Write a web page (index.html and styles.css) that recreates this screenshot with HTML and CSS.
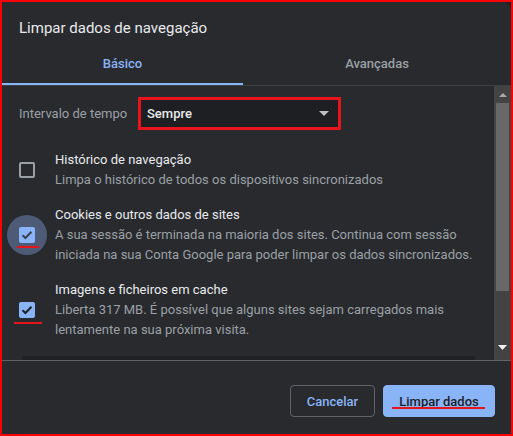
FILE: index.html
```html
<!DOCTYPE html>
<html lang="pt">
<head>
<meta charset="utf-8">
<title>Limpar dados de navegação</title>
<link rel="stylesheet" href="styles.css">
</head>
<body>
<div class="frame">
  <div class="dialog">
    <h1 class="title">Limpar dados de navegação</h1>
    <div class="tabs">
      <div class="tab tab-basic active">Básico</div>
      <div class="tab tab-adv">Avançadas</div>
    </div>
    <div class="body">
      <div class="scroll">
        <div class="time-row">
          <span class="time-label">Intervalo de tempo</span>
          <div class="select">
            <span class="select-value">Sempre</span>
            <svg class="select-arrow" width="10" height="5" viewBox="0 0 10 5"><path d="M0 0H10L5 5Z" fill="#bdc1c6"/></svg>
          </div>
        </div>
        <div class="item">
          <div class="cb-cell"><span class="cb"></span></div>
          <div class="item-text">
            <div class="item-title">Histórico de navegação</div>
            <div class="item-desc">Limpa o histórico de todos os dispositivos sincronizados</div>
          </div>
        </div>
        <div class="item">
          <div class="cb-cell">
            <span class="ripple"></span>
            <span class="cb checked mark-a">
              <svg width="12" height="10" viewBox="0 0 12 10"><path d="M1.5 5.2L4.4 8L10.5 1.8" fill="none" stroke="#3c4250" stroke-width="2"/></svg>
            </span>
          </div>
          <div class="item-text">
            <div class="item-title">Cookies e outros dados de sites</div>
            <div class="item-desc">A sua sessão é terminada na maioria dos sites. Continua com sessão<br>iniciada na sua Conta Google para poder limpar os dados sincronizados.</div>
          </div>
        </div>
        <div class="item">
          <div class="cb-cell">
            <span class="cb checked mark-b">
              <svg width="12" height="10" viewBox="0 0 12 10"><path d="M1.5 5.2L4.4 8L10.5 1.8" fill="none" stroke="#202124" stroke-width="2"/></svg>
            </span>
          </div>
          <div class="item-text">
            <div class="item-title">Imagens e ficheiros em cache</div>
            <div class="item-desc">Liberta 317 MB. É possível que alguns sites sejam carregados mais<br>lentamente na sua próxima visita.</div>
          </div>
        </div>
        <div class="next-strip"></div>
      </div>
      <div class="scrollbar">
        <div class="sb-btn"><svg width="8" height="4" viewBox="0 0 8 4"><path d="M0 4H8L4 0Z" fill="#a8a8a8"/></svg></div>
        <div class="sb-track"><div class="sb-thumb"></div></div>
        <div class="sb-btn sb-down"><svg width="9" height="5" viewBox="0 0 9 5"><path d="M0 0H9L4.5 5Z" fill="#f2f2f2"/></svg></div>
      </div>
    </div>
    <div class="footer">
      <button class="btn btn-cancel">Cancelar</button>
      <button class="btn btn-primary">Limpar dados</button>
    </div>
  </div>
</div>
</body>
</html>
```
FILE: styles.css
```css
* { box-sizing: border-box; }
html, body { margin: 0; padding: 0; }
body {
  width: 513px;
  height: 436px;
  font-family: Roboto, "Noto Sans", sans-serif;
  background: #202124;
  overflow: hidden;
}
.frame {
  width: 513px;
  height: 436px;
  border: 2px solid #ff0000;
  background: #1f2023;
}
.dialog {
  height: 100%;
  background: #292a2d;
  border-top-right-radius: 8px;
  display: flex;
  flex-direction: column;
}
.title {
  margin: 0;
  padding: 15px 0 0 17px;
  height: 42px;
  font-size: 15px;
  line-height: 22px;
  font-weight: 400;
  color: #e8eaed;
}
.tabs {
  display: flex;
  height: 42px;
  border-bottom: 1px solid #3c4043;
}
.tab {
  height: 41px;
  display: flex;
  align-items: center;
  justify-content: center;
  padding-bottom: 2px;
  font-size: 13px;
  font-weight: 500;
  color: #9aa0a6;
}
.tab-basic { width: 241px; }
.tab-adv { flex: 1; }
.tab.active {
  color: #8ab4f8;
  border-bottom: 2px solid #8ab4f8;
  padding-bottom: 0;
}
.body {
  height: 274px;
  display: flex;
  overflow: hidden;
}
.scroll {
  flex: 1;
  padding: 11px 0 0 17px;
  overflow: hidden;
}
.time-row {
  display: flex;
  align-items: center;
  height: 33px;
}
.time-label {
  width: 119px;
  font-size: 13px;
  color: #9aa0a6;
}
.select {
  width: 203px;
  height: 33px;
  border: 3px solid #e8141c;
  background: #1e1f22;
  display: flex;
  align-items: center;
  justify-content: space-between;
  padding: 0 9px 0 6px;
}
.select-value {
  font-size: 13px;
  font-weight: 500;
  color: #e8eaed;
}
.item {
  display: flex;
  align-items: center;
  padding: 8px 0 7px;
}
.time-row + .item { margin-top: 12px; }
.cb-cell {
  position: relative;
  width: 36px;
  flex: none;
  display: flex;
  align-items: center;
}
.ripple {
  position: absolute;
  left: -12px;
  top: 50%;
  width: 40px;
  height: 40px;
  margin-top: -20px;
  border-radius: 50%;
  background: #4d5b77;
}
.cb {
  position: relative;
  width: 16px;
  height: 16px;
  border: 2px solid #9aa0a6;
  border-radius: 2px;
  display: flex;
  align-items: center;
  justify-content: center;
}
.cb.checked {
  border: none;
  background: #8ab4f8;
}
.cb.mark-a::after,
.cb.mark-b::after {
  content: "";
  position: absolute;
  height: 2px;
  background: #e8141c;
}
.cb.mark-a::after { left: -2px; width: 22px; top: 19px; }
.cb.mark-b::after { left: -5px; width: 28px; top: 20px; }
.item-text {
  font-size: 13px;
  line-height: 20px;
  white-space: nowrap;
}
.item-title { color: #e8eaed; }
.item-desc { color: #9aa0a6; }
.next-strip {
  margin: 9px 0 0 3px;
  width: 453px;
  height: 6px;
  background: #202124;
}
.scrollbar {
  width: 17px;
  flex: none;
  background: #434343;
  display: flex;
  flex-direction: column;
}
.sb-btn {
  height: 17px;
  display: flex;
  align-items: center;
  justify-content: center;
}
.sb-track {
  flex: 1;
  padding: 0 2px;
}
.sb-thumb {
  height: 188px;
  background: #686868;
}
.sb-down { height: 21px; padding-bottom: 5px; }
.footer {
  flex: 1;
  border-top: 1px solid #5f6368;
  display: flex;
  justify-content: flex-end;
  gap: 8px;
  padding: 24px 16px 0 0;
}
.btn {
  position: relative;
  height: 32px;
  border-radius: 4px;
  font-family: Roboto, "Noto Sans", sans-serif;
  font-size: 13px;
  font-weight: 500;
  cursor: pointer;
}
.btn-cancel {
  width: 85px;
  background: transparent;
  border: 1px solid #5f6368;
  color: #8ab4f8;
}
.btn-primary {
  width: 112px;
  background: #8ab4f8;
  border: 1px solid #8ab4f8;
  color: #202124;
}
.btn-primary::after {
  content: "";
  position: absolute;
  left: 8px;
  right: 9px;
  top: 21px;
  height: 2px;
  background: #e8141c;
}
```
